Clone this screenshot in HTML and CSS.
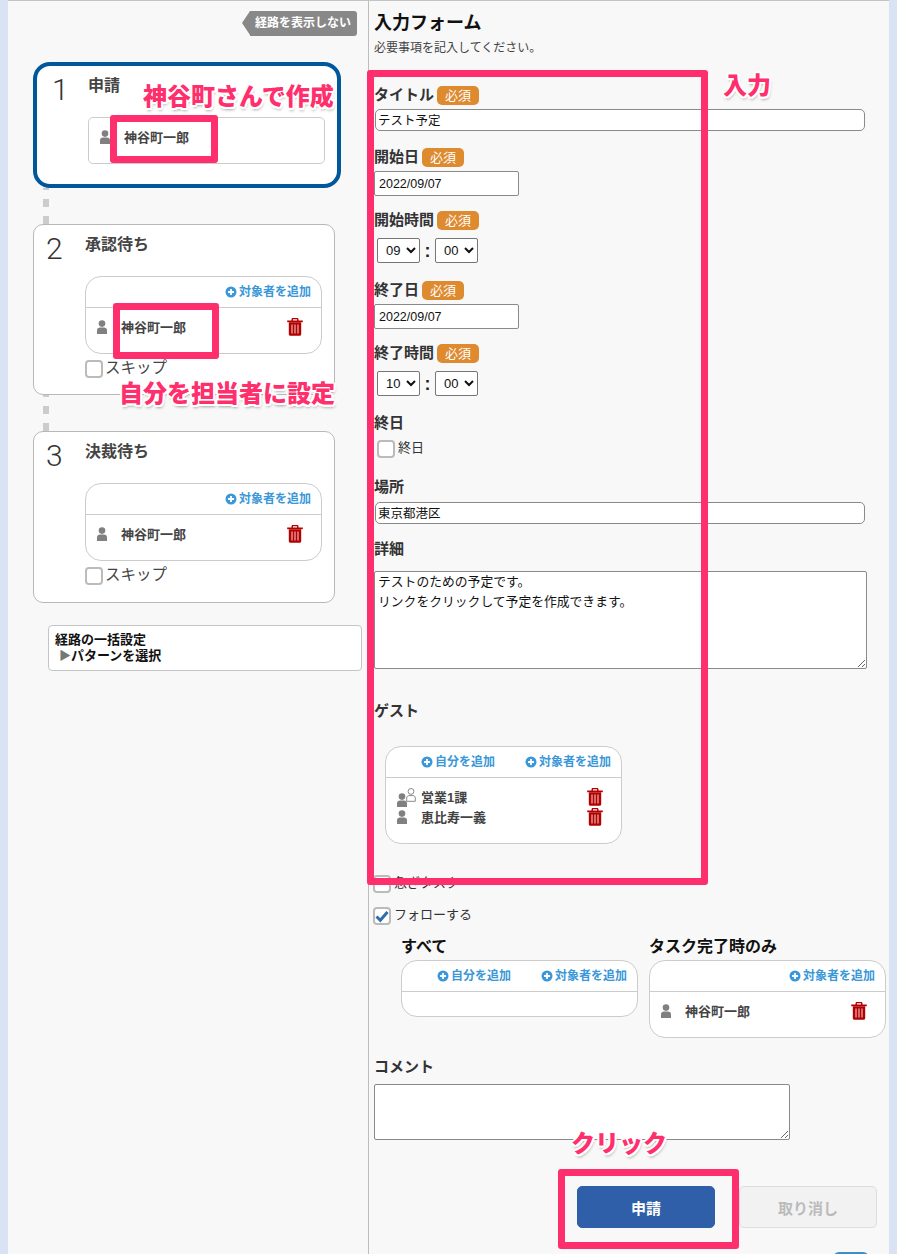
FILE: index.html
```html
<!DOCTYPE html>
<html lang="ja">
<head>
<meta charset="utf-8">
<title>入力フォーム</title>
<link rel="stylesheet" href="styles.css">
</head>
<body>
<svg class="defs" width="0" height="0" aria-hidden="true">
  <symbol id="i-person" viewBox="0 0 10 14">
    <circle cx="5" cy="3.6" r="3.3"/>
    <path d="M0 14V10.2C0 8.4 1.4 7.4 3 7.4H7C8.6 7.4 10 8.4 10 10.2V14Z"/>
  </symbol>
  <symbol id="i-trash" viewBox="0 0 16 18">
    <path d="M5.2 3V1.4C5.2.9 5.6.6 6 .6H10C10.4.6 10.8.9 10.8 1.4V3" fill="none" stroke="#b30000" stroke-width="1.4"/>
    <rect x=".2" y="2.5" width="15.6" height="1.7" fill="#b30000"/>
    <path d="M1.8 4.2H14.2V16C14.2 17 13.5 17.8 12.6 17.8H3.4C2.5 17.8 1.8 17 1.8 16Z" fill="#b30000"/>
    <path d="M5 6.6V15.4M8 6.6V15.4M11 6.6V15.4" stroke="#e6a6a6" stroke-width="1.3"/>
  </symbol>
  <symbol id="i-plus" viewBox="0 0 12 12">
    <circle cx="6" cy="6" r="5.5" fill="#3a97d8"/>
    <path d="M6 3V9M3 6H9" stroke="#fff" stroke-width="1.8"/>
  </symbol>
</svg>

<main class="panel">
  <section class="route">
    <div class="route-toggle"><span class="route-tag">経路を表示しない</span></div>

    <article class="step step-active">
      <div class="step-no">1</div>
      <div class="step-body">
        <h3 class="step-title">申請</h3>
        <div class="applicant">
          <div class="person">
            <svg class="ico-person"><use href="#i-person"/></svg>
            <span class="person-name">神谷町一郎</span>
          </div>
        </div>
      </div>
    </article>
    <div class="connector"></div>

    <article class="step">
      <div class="step-no">2</div>
      <div class="step-body">
        <h3 class="step-title">承認待ち</h3>
        <div class="assign assign-step">
          <div class="assign-head">
            <a class="add-link"><svg class="ico-plus"><use href="#i-plus"/></svg>対象者を追加</a>
          </div>
          <div class="assign-list">
            <div class="person">
              <svg class="ico-person"><use href="#i-person"/></svg>
              <span class="person-name">神谷町一郎</span>
              <svg class="ico-trash"><use href="#i-trash"/></svg>
            </div>
          </div>
        </div>
        <label class="skip"><span class="check"></span>スキップ</label>
      </div>
    </article>
    <div class="connector"></div>

    <article class="step step-last">
      <div class="step-no">3</div>
      <div class="step-body">
        <h3 class="step-title">決裁待ち</h3>
        <div class="assign assign-step">
          <div class="assign-head">
            <a class="add-link"><svg class="ico-plus"><use href="#i-plus"/></svg>対象者を追加</a>
          </div>
          <div class="assign-list">
            <div class="person">
              <svg class="ico-person"><use href="#i-person"/></svg>
              <span class="person-name">神谷町一郎</span>
              <svg class="ico-trash"><use href="#i-trash"/></svg>
            </div>
          </div>
        </div>
        <label class="skip"><span class="check"></span>スキップ</label>
      </div>
    </article>

    <div class="bulk">
      <div>経路の一括設定</div>
      <div><span class="bulk-arrow">▶</span>パターンを選択</div>
    </div>
  </section>

  <section class="form">
    <h1 class="form-title">入力フォーム</h1>
    <p class="form-sub">必要事項を記入してください。</p>

    <div class="label-row gap-29"><span class="label">タイトル</span><span class="badge">必須</span></div>
    <input class="text-input wide gap-4" type="text" value="テスト予定">

    <div class="label-row gap-16"><span class="label">開始日</span><span class="badge">必須</span></div>
    <input class="text-input date gap-4" type="text" value="2022/09/07">

    <div class="label-row gap-14"><span class="label">開始時間</span><span class="badge">必須</span></div>
    <div class="time-row">
      <select class="time"><option>09</option></select><span class="colon">:</span><select class="time"><option>00</option></select>
    </div>

    <div class="label-row gap-17"><span class="label">終了日</span><span class="badge">必須</span></div>
    <input class="text-input date gap-4" type="text" value="2022/09/07">

    <div class="label-row gap-14"><span class="label">終了時間</span><span class="badge">必須</span></div>
    <div class="time-row">
      <select class="time"><option>10</option></select><span class="colon">:</span><select class="time"><option>00</option></select>
    </div>

    <div class="label-row gap-17"><span class="label">終日</span></div>
    <label class="check-row allday"><span class="check"></span>終日</label>

    <div class="label-row gap-19"><span class="label">場所</span></div>
    <input class="text-input wide gap-5" type="text" value="東京都港区">

    <div class="label-row gap-15"><span class="label">詳細</span></div>
    <textarea class="area area-detail">テストのための予定です。
リンクをクリックして予定を作成できます。</textarea>

    <div class="label-row gap-32"><span class="label">ゲスト</span></div>
    <div class="assign assign-guest">
      <div class="assign-head">
        <a class="add-link"><svg class="ico-plus"><use href="#i-plus"/></svg>自分を追加</a>
        <a class="add-link"><svg class="ico-plus"><use href="#i-plus"/></svg>対象者を追加</a>
      </div>
      <div class="assign-list">
        <div class="person">
          <span class="ico-group">
            <svg class="ico-person group-a"><use href="#i-person"/></svg>
            <svg class="group-b" viewBox="0 0 10 14"><circle cx="5" cy="3.4" r="2.9"/><path d="M.7 13.3V10C.7 8.6 1.8 7.6 3 7.6H7C8.2 7.6 9.3 8.6 9.3 10V13.3Z"/></svg>
          </span>
          <span class="person-name">営業1課</span>
          <svg class="ico-trash"><use href="#i-trash"/></svg>
        </div>
        <div class="person">
          <svg class="ico-person"><use href="#i-person"/></svg>
          <span class="person-name">恵比寿一義</span>
          <svg class="ico-trash"><use href="#i-trash"/></svg>
        </div>
      </div>
    </div>

    <label class="check-row urgent"><span class="check"></span>急ぎタスク</label>
    <label class="check-row follow">
      <span class="check">
        <svg class="tick" viewBox="0 0 14 14"><path d="M1.5 7.5L5.3 11.2L12.5 3" fill="none" stroke="#2f6ea8" stroke-width="3"/></svg>
      </span>フォローする
    </label>

    <div class="follow-cols">
      <div class="follow-col">
        <h4 class="follow-title">すべて</h4>
        <div class="assign">
          <div class="assign-head">
            <a class="add-link"><svg class="ico-plus"><use href="#i-plus"/></svg>自分を追加</a>
            <a class="add-link"><svg class="ico-plus"><use href="#i-plus"/></svg>対象者を追加</a>
          </div>
          <div class="assign-empty"></div>
        </div>
      </div>
      <div class="follow-col">
        <h4 class="follow-title">タスク完了時のみ</h4>
        <div class="assign">
          <div class="assign-head">
            <a class="add-link"><svg class="ico-plus"><use href="#i-plus"/></svg>対象者を追加</a>
          </div>
          <div class="assign-list">
            <div class="person">
              <svg class="ico-person"><use href="#i-person"/></svg>
              <span class="person-name">神谷町一郎</span>
              <svg class="ico-trash"><use href="#i-trash"/></svg>
            </div>
          </div>
        </div>
      </div>
    </div>

    <div class="label-row gap-19"><span class="label">コメント</span></div>
    <textarea class="area area-comment"></textarea>

    <div class="actions">
      <button class="btn btn-primary" type="button">申請</button>
      <button class="btn btn-cancel" type="button">取り消し</button>
    </div>
    <div class="next-peek"></div>
  </section>

  <div class="mark mark-creator"></div>
  <div class="mark mark-assignee"></div>
  <div class="mark mark-form"></div>
  <div class="mark mark-submit"></div>
  <div class="note note-creator">神谷町さんで作成</div>
  <div class="note note-assignee">自分を担当者に設定</div>
  <div class="note note-form">入力</div>
  <div class="note note-submit">クリック</div>
</main>
</body>
</html>
```

FILE: styles.css
```css
* { box-sizing: border-box; }
html, body { margin: 0; height: 100%; }
body {
  background: #dae3f3;
  font-family: "Liberation Sans", "Noto Sans CJK JP", sans-serif;
  color: #333;
  overflow: hidden;
}
.defs { position: absolute; }
h1, h3, h4, p { margin: 0; }

.panel {
  position: relative;
  display: flex;
  margin: 0 8px;
  height: 1254px;
  background: #f8f8f8;
  border-top: 1px solid #c4c4c4;
  overflow: hidden;
}

/* left column */
.route {
  flex: 0 0 361px;
  border-right: 1px solid #bdbdbd;
  padding-left: 25px;
}
.route-toggle {
  display: flex;
  justify-content: flex-end;
  margin: 10px 11px 26px 0;
}
.route-tag {
  position: relative;
  height: 25px;
  padding: 0 6px 0 5px;
  background: #888;
  border-radius: 0 3px 3px 0;
  color: #fff;
  font-size: 12px;
  font-weight: 700;
  line-height: 25px;
}
.route-tag::before {
  content: "";
  position: absolute;
  left: -8px;
  top: 0;
  border-style: solid;
  border-width: 12.5px 8px 12.5px 0;
  border-color: transparent #888 transparent transparent;
}
.step {
  display: flex;
  width: 302px;
  padding: 10px 0 16px 12px;
  background: #fff;
  border: 1px solid #b8b8b8;
  border-radius: 10px;
}
.step-last { padding-bottom: 17px; }
.step-active {
  width: 308px;
  padding: 10px 0 20px 15px;
  border: 4px solid #00579b;
  border-radius: 17px;
}
.step-no {
  flex: 0 0 39px;
  height: 30px;
  font-family: Roboto, "Liberation Sans", sans-serif;
  font-weight: 300;
  font-size: 30px;
  line-height: 27px;
  color: #333;
}
.step-active .step-no { flex-basis: 36px; }
.step-body { width: 237px; }
.step-title {
  font-size: 16px;
  font-weight: 700;
  line-height: 20px;
  color: #444;
}
.applicant {
  height: 47px;
  margin-top: 21px;
  padding: 9px 0 0 11px;
  background: #fff;
  border: 1px solid #ccc;
  border-radius: 5px;
}
.connector {
  width: 6px;
  height: 36px;
  margin-left: 10px;
  background: repeating-linear-gradient(to top, #ccc 0 8px, transparent 8px 17px);
}

.assign {
  background: #fff;
  border: 1px solid #ccc;
  border-radius: 16px;
  width: 237px;
}
.assign-step { margin-top: 21px; }
.assign-guest { margin: 25px 0 0 11px; }
.assign-head {
  display: flex;
  justify-content: flex-end;
  align-items: center;
  gap: 30px;
  height: 31px;
  padding-right: 10px;
  border-bottom: 1px solid #ccc;
}
.assign-list { padding: 9px 18px 16px 11px; }
.assign-empty { height: 24px; }
.add-link {
  display: inline-flex;
  align-items: center;
  gap: 2px;
  color: #3a97d8;
  font-size: 12px;
  font-weight: 700;
  line-height: 16px;
}
.ico-plus { width: 12px; height: 12px; }
.person {
  display: flex;
  align-items: center;
  height: 20px;
}
.ico-person {
  width: 10px;
  height: 14px;
  margin-right: 14px;
  fill: #808080;
  flex: none;
}
.ico-trash {
  width: 16px;
  height: 18px;
  margin-left: auto;
  flex: none;
}
.person-name {
  padding-bottom: 2px;
  font-size: 13px;
  font-weight: 700;
  color: #444;
}
.ico-group {
  position: relative;
  flex: none;
  width: 24px;
  height: 20px;
}
.group-a {
  position: absolute;
  left: 0;
  bottom: 0;
  margin: 0;
}
.group-b {
  position: absolute;
  left: 9px;
  top: 1px;
  width: 10px;
  height: 14px;
  fill: #fff;
  stroke: #8a8a8a;
  stroke-width: 1;
}
.check {
  display: inline-flex;
  flex: none;
  align-items: center;
  justify-content: center;
  width: 18px;
  height: 18px;
  background: #fff;
  border: 2px solid #bbb;
  border-radius: 4px;
}
.tick { width: 14px; height: 14px; }
.skip {
  display: flex;
  align-items: flex-start;
  gap: 2px;
  height: 18px;
  margin-top: 6px;
  font-size: 15.5px;
  line-height: 16px;
  color: #444;
}
.bulk {
  width: 314px;
  height: 46px;
  margin: 22px 0 0 15px;
  padding: 6px;
  background: #fff;
  border: 1px solid #c4c4c4;
  border-radius: 4px;
  color: #111;
  font-size: 13px;
  font-weight: 700;
  line-height: 16px;
}
.bulk-arrow { color: #777; padding-left: 4px; font-size: 12px; }

/* right column */
.form { flex: 1; padding-left: 5px; min-width: 0; }
.form-title {
  margin-top: 10px;
  color: #111;
  font-size: 18px;
  font-weight: 700;
  line-height: 24px;
}
.form-sub {
  margin-top: 5px;
  color: #444;
  font-size: 12px;
  line-height: 16px;
}
.label-row {
  display: flex;
  align-items: center;
  gap: 3px;
  height: 20px;
}
.gap-14 { margin-top: 14px; }
.gap-15 { margin-top: 15px; }
.gap-16 { margin-top: 16px; }
.gap-17 { margin-top: 17px; }
.gap-19 { margin-top: 19px; }
.gap-29 { margin-top: 29px; }
.gap-32 { margin-top: 32px; }
.gap-4 { margin-top: 4px; }
.gap-5 { margin-top: 5px; }
.label {
  padding-bottom: 4px;
  color: #333;
  font-size: 15px;
  font-weight: 700;
}
.badge {
  width: 42px;
  height: 19px;
  background: #de8a2f;
  border-radius: 5px;
  color: #fff;
  font-size: 13px;
  line-height: 19px;
  text-align: center;
}
.text-input {
  display: block;
  padding: 0 3px;
  background: #fff;
  border: 1px solid #8a8a8a;
  color: #111;
  font: 12.5px "Liberation Sans", "Noto Sans CJK JP", sans-serif;
  outline: none;
}
.wide { width: 490px; height: 22px; border-radius: 5px; margin-left: 1px; padding: 0 2px 2px; }
.date { width: 145px; height: 25px; border-radius: 2px; padding-left: 4px; }
.time-row {
  display: flex;
  align-items: center;
  margin: 8px 0 0 3px;
  height: 25px;
}
.time {
  width: 43px;
  height: 25px;
  padding: 0 0 0 4px;
  background-color: #fff;
  border: 1px solid #767676;
  border-radius: 2px;
  color: #111;
  font: 13px "Liberation Sans", sans-serif;
}
.colon {
  width: 15px;
  color: #222;
  font-size: 18px;
  font-weight: 700;
  text-align: center;
  line-height: 22px;
}
.check-row {
  display: flex;
  align-items: flex-start;
  gap: 3px;
  height: 18px;
  color: #333;
  font-size: 13px;
  line-height: 15px;
}
.allday { margin: 7px 0 0 3px; }
.urgent { margin: 31px 0 0 -1px; }
.follow { margin: 14px 0 0 -1px; }
.area {
  display: block;
  padding: 0 3px;
  background: #fff;
  border: 1px solid #8a8a8a;
  border-radius: 2px;
  color: #111;
  font: 12.8px/20px "Liberation Sans", "Noto Sans CJK JP", sans-serif;
  outline: none;
}
.area-detail { width: 493px; height: 98px; margin-top: 12px; }
.area-comment { width: 416px; height: 56px; margin-top: 7px; }
.follow-cols {
  display: flex;
  align-items: flex-start;
  gap: 11px;
  margin: 11px 0 0 27px;
}
.follow-col { width: 237px; }
.follow-title {
  height: 24px;
  color: #111;
  font-size: 16px;
  font-weight: 700;
  line-height: 21px;
}
.actions {
  display: flex;
  gap: 24px;
  margin: 46px 0 0 203px;
}
.btn {
  width: 138px;
  height: 42px;
  border-radius: 5px;
  font: 700 15px "Liberation Sans", "Noto Sans CJK JP", sans-serif;
}
.btn-primary { background: #2f5fa8; border: 1px solid #2f5fa8; color: #fff; }
.btn-cancel { background: #f2f2f2; border: 1px solid #ddd; color: #bbb; }
.next-peek {
  width: 36px;
  height: 8px;
  margin: 24px 0 0 459px;
  background: #3a8fc8;
  border-radius: 6px 6px 0 0;
}

/* screenshot annotations */
.mark {
  position: absolute;
  border: 7px solid #ff2f6d;
  border-radius: 3px;
}
.mark-creator { left: 102px; top: 114px; width: 108px; height: 48px; }
.mark-assignee { left: 105px; top: 302px; width: 106px; height: 56px; }
.mark-form { left: 359px; top: 69px; width: 341px; height: 815px; }
.mark-submit { left: 550px; top: 1168px; width: 181px; height: 80px; }
.note {
  position: absolute;
  color: #ff2f6d;
  font-family: "Noto Sans CJK JP", sans-serif;
  font-size: 24px;
  font-weight: 900;
  line-height: 24px;
  white-space: nowrap;
  text-shadow:
    -1.5px -1.5px 0 #fff, 1.5px -1.5px 0 #fff, -1.5px 1.5px 0 #fff, 1.5px 1.5px 0 #fff,
    0 2px 0 #fff, 2px 0 0 #fff, -2px 0 0 #fff, 0 -2px 0 #fff,
    1px 3px 3px rgba(0, 0, 0, .35);
}
.note-creator { left: 135px; top: 82px; }
.note-assignee { left: 111px; top: 379px; }
.note-form { left: 715px; top: 71px; }
.note-submit { left: 563px; top: 1129px; }
```
